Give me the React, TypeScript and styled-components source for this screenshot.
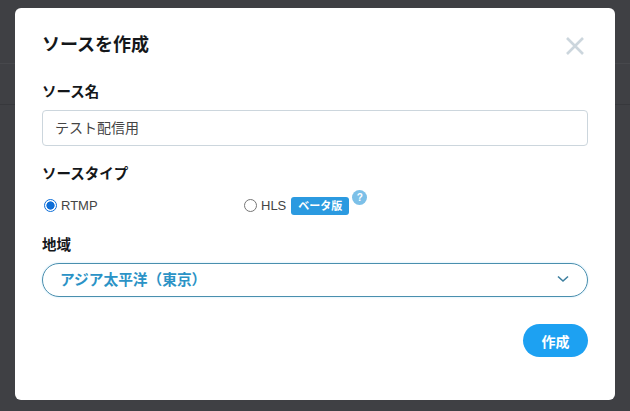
import styled, { createGlobalStyle } from 'styled-components';

const GlobalStyle = createGlobalStyle`
  html, body {
    margin: 0;
    padding: 0;
    height: 100%;
    overflow: hidden;
    background: #3f4044;
  }
  * {
    box-sizing: border-box;
  }
  body {
    font-family: 'Liberation Sans', 'Noto Sans CJK JP', sans-serif;
  }
`;

const SPage = styled.div`
  position: relative;
  width: 630px;
  height: 411px;
  background: #3f4044;
`;

const SBackdropTop = styled.div`
  height: 64px;
  border-bottom: 1px solid #47484c;
`;

const SBackdropRow = styled.div`
  height: 41px;
  border-bottom: 1px solid #37383c;
`;

const SModal = styled.div`
  position: absolute;
  top: 8px;
  left: 15px;
  width: 600px;
  height: 392px;
  padding: 0 27px;
  background: #fff;
  border-radius: 6px;
  display: flex;
  flex-direction: column;
`;

const SHeader = styled.header`
  height: 72px;
  padding-top: 25px;
  display: flex;
  justify-content: space-between;
  align-items: flex-start;
`;

const STitle = styled.h2`
  margin: 0;
  font-size: 18px;
  line-height: 25px;
  font-weight: 700;
  color: #14171a;
`;

const SClose = styled.button`
  width: 20px;
  height: 20px;
  margin: 4px 4px 0 0;
  padding: 0;
  border: none;
  background: none;
  display: block;
  svg {
    display: block;
  }
`;

const SLabel = styled.div`
  height: 22px;
  font-size: 14.5px;
  line-height: 24px;
  font-weight: 700;
  color: #14171a;
`;

const SInput = styled.div`
  height: 36px;
  margin: 8px 0 16px;
  padding: 0 12px;
  border: 1px solid #ccd6dd;
  border-radius: 4px;
  font-size: 14px;
  line-height: 34px;
  color: #444;
`;

const SRadioRow = styled.div`
  height: 24px;
  margin: 9px 0 16px;
  display: grid;
  grid-template-columns: 200px 1fr;
  align-items: center;
`;

const SRadioItem = styled.label`
  display: flex;
  align-items: center;
  font-size: 13px;
  color: #444;
`;

const SRadioDot = styled.span<{ checked?: boolean }>`
  width: 13px;
  height: 13px;
  margin: 0 4px 0 2px;
  border-radius: 50%;
  border: 1px solid ${(p) => (p.checked ? '#0f6fd8' : '#767676')};
  background: ${(p) => (p.checked ? 'radial-gradient(circle, #0f6fd8 0 3.8px, #fff 4.4px)' : '#fff')};
`;

const SBeta = styled.span`
  height: 18px;
  margin: 2px 0 0 5px;
  padding: 0 7px;
  border-radius: 3px;
  background: #2b9ae0;
  color: #fff;
  font-size: 11px;
  line-height: 18px;
  font-weight: 700;
`;

const SHelp = styled.span`
  width: 15px;
  height: 15px;
  margin: -16px 0 0 3px;
  border-radius: 50%;
  background: #7cc0e8;
  color: #fff;
  font-size: 10px;
  line-height: 15px;
  font-weight: 700;
  text-align: center;
`;

const SSelect = styled.div`
  height: 34px;
  margin-top: 8px;
  padding: 0 18px 3px 17px;
  border: 1px solid #4a8fae;
  border-radius: 17px;
  box-shadow: 0 0 2px rgba(29, 161, 242, 0.3);
  display: flex;
  justify-content: space-between;
  align-items: center;
  font-size: 14.7px;
  font-weight: 700;
  color: #2b93c6;
`;

const SFooter = styled.div`
  margin-top: 27px;
  display: flex;
  justify-content: flex-end;
`;

const SButton = styled.button`
  width: 65px;
  height: 33px;
  padding: 0;
  border: none;
  border-radius: 17px;
  background: #1da1f2;
  color: #fff;
  font-family: inherit;
  font-size: 14px;
  font-weight: 700;
`;

export default function App() {
  return (
    <SPage>
      <GlobalStyle />
      <SBackdropTop />
      <SBackdropRow />
      <SModal>
        <SHeader>
          <STitle>ソースを作成</STitle>
          <SClose aria-label="閉じる">
            <svg width="20" height="20" viewBox="0 0 20 20" fill="none">
              <path d="M3 1 L19 17 M19 1 L3 17" stroke="#ccd6dd" strokeWidth="2.6" />
            </svg>
          </SClose>
        </SHeader>
        <SLabel>ソース名</SLabel>
        <SInput>テスト配信用</SInput>
        <SLabel>ソースタイプ</SLabel>
        <SRadioRow>
          <SRadioItem>
            <SRadioDot checked />
            RTMP
          </SRadioItem>
          <SRadioItem>
            <SRadioDot />
            HLS
            <SBeta>ベータ版</SBeta>
            <SHelp>?</SHelp>
          </SRadioItem>
        </SRadioRow>
        <SLabel>地域</SLabel>
        <SSelect>
          アジア太平洋（東京）
          <svg width="12" height="8" viewBox="0 0 12 8" fill="none">
            <path d="M1 1.5 L6 6 L11 1.5" stroke="#3d7f9f" strokeWidth="1.6" />
          </svg>
        </SSelect>
        <SFooter>
          <SButton>作成</SButton>
        </SFooter>
      </SModal>
    </SPage>
  );
}
